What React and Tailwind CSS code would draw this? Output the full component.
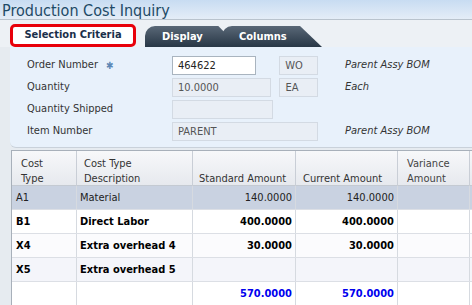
const FONT = { fontFamily: '"DejaVu Sans Condensed", "DejaVu Sans", Tahoma, sans-serif', fontStretch: 'condensed' };

const ROWS = [
  { type: 'A1', desc: 'Material', std: '140.0000', cur: '140.0000', bold: false, bg: 'bg-[#c9d2e1]' },
  { type: 'B1', desc: 'Direct Labor', std: '400.0000', cur: '400.0000', bold: true, bg: 'bg-white' },
  { type: 'X4', desc: 'Extra overhead 4', std: '30.0000', cur: '30.0000', bold: true, bg: 'bg-[#fbfbfd]' },
  { type: 'X5', desc: 'Extra overhead 5', std: '', cur: '', bold: true, bg: 'bg-[#f4f5fa]' },
];

const COLS = 'grid grid-cols-[65px_116px_103px_102px_72px_1fr]';

function Field({ value, width, white }) {
  return (
    <div
      className={`h-[19px] border px-[5px] text-[11px] leading-[17px] ${width} ${
        white ? 'bg-white border-[#a9b4bf] text-[#222]' : 'bg-[#e9eef5] border-[#d3dae3] text-[#555]'
      }`}
    >
      {value}
    </div>
  );
}

function FormRow({ label, star, children, note }) {
  return (
    <div className="flex items-center h-[22px]">
      <div className="w-[162px] pl-[17px] text-[11px] text-[#333] flex items-center gap-[8px]">
        {label}
        {star && <span className="text-[#5d88b5] text-[10px]">✱</span>}
      </div>
      <div className="w-[146px] flex gap-[8px]">{children}</div>
      <div className="pl-[27px] italic text-[11px] text-[#333]">{note}</div>
    </div>
  );
}

function DarkTab({ label, className }) {
  return (
    <div className={`relative h-[21px] ${className}`}>
      <div className="absolute inset-0 rounded-tl-[10px] rounded-tr-[18px] bg-gradient-to-b from-[#5a6877] to-[#283746] [clip-path:polygon(0_0,78%_0,100%_100%,0_100%)]" />
      <span className="relative block pl-[17px] leading-[21px] text-[11px] font-bold text-white">{label}</span>
    </div>
  );
}

export default function App() {
  return (
    <div className="w-[472px] h-[305px] overflow-hidden bg-[#e6ebf0]" style={FONT}>
      <div className="h-[20px] bg-gradient-to-b from-[#c8dcf2] to-[#e4edf7] border-b border-[#b9c3cd] pl-[2px] text-[16px] leading-[21px] text-[#1e4a66]">
        Production Cost Inquiry
      </div>

      <div className="flex items-end h-[27px] pl-[10px] pt-[4px] bg-[#edf1f5]">
        <div className="w-[126px] h-[23px] bg-white border-[3px] border-[#e8000a] rounded-[5px] flex items-center justify-center text-[11px] font-bold text-[#1a2f4a]">
          Selection Criteria
        </div>
        <DarkTab label="Display" className="ml-[9px] w-[94px]" />
        <DarkTab label="Columns" className="-ml-[17px] w-[100px]" />
      </div>

      <div className="ml-[10px] bg-[#e8f1fb] rounded-bl-[6px] border-b border-[#c9d1da] pt-[7px] pb-[5px]">
        <FormRow label="Order Number" star note="Parent Assy BOM">
          <Field value="464622" width="w-[85px]" white />
          <Field value="WO" width="w-[39px] ml-[15px]" />
        </FormRow>
        <FormRow label="Quantity" note="Each">
          <Field value="10.0000" width="w-[101px]" />
          <Field value="EA" width="w-[39px]" />
        </FormRow>
        <FormRow label="Quantity Shipped">
          <Field value="" width="w-[101px]" />
        </FormRow>
        <FormRow label="Item Number" note="Parent Assy BOM">
          <Field value="PARENT" width="w-[146px]" />
        </FormRow>
      </div>

      <div className="ml-[11px] mt-[2px] border-l border-t border-[#a8b0ba] bg-white text-[11px] text-[#222]">
        <div className={`${COLS} h-[35px] bg-gradient-to-b from-[#f7f8fa] to-[#e6e9ee] border-b border-[#c4cad2] whitespace-nowrap text-[#333]`}>
          <div className="border-r border-[#c9ced6] px-[9px] pt-[5px] leading-[15px]">Cost<br />Type</div>
          <div className="border-r border-[#c9ced6] px-[7px] pt-[5px] leading-[15px]">Cost Type<br />Description</div>
          <div className="border-r border-[#c9ced6] px-[6px] pt-[20px] leading-[15px]">Standard Amount</div>
          <div className="border-r border-[#c9ced6] px-[7px] pt-[20px] leading-[15px]">Current Amount</div>
          <div className="border-r border-[#c9ced6] px-[9px] pt-[5px] leading-[15px] text-[#444]">Variance<br />Amount</div>
          <div />
        </div>
        {ROWS.map((r) => (
          <div key={r.type} className={`${COLS} h-[24px] leading-[23px] border-b border-[#dcdfe5] ${r.bg} ${r.bold ? 'font-bold text-black' : ''}`}>
            <div className="border-r border-[#d6dae0] px-[4px]">{r.type}</div>
            <div className="border-r border-[#d6dae0] px-[3px]">{r.desc}</div>
            <div className="border-r border-[#d6dae0] px-[3px] text-right">{r.std}</div>
            <div className="border-r border-[#d6dae0] px-[3px] text-right">{r.cur}</div>
            <div className="border-r border-[#d6dae0]" />
            <div />
          </div>
        ))}
        <div className={`${COLS} h-[24px] leading-[23px] font-bold text-[#0000ee]`}>
          <div className="border-r border-[#d6dae0]" />
          <div className="border-r border-[#d6dae0]" />
          <div className="border-r border-[#d6dae0] px-[3px] text-right">570.0000</div>
          <div className="border-r border-[#d6dae0] px-[3px] text-right">570.0000</div>
          <div className="border-r border-[#d6dae0]" />
          <div />
        </div>
      </div>
    </div>
  );
}
